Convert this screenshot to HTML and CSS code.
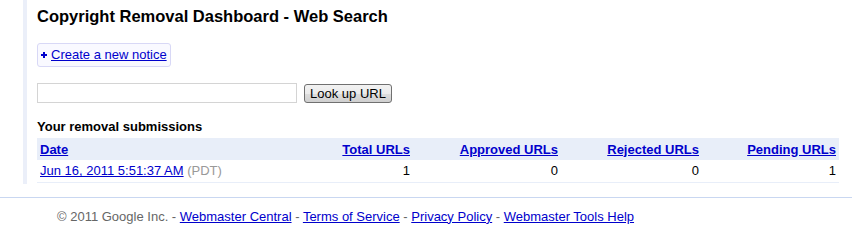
FILE: index.html
```html
<!DOCTYPE html>
<html lang="en">
<head>
  <meta charset="UTF-8" />
  <title>Copyright Removal Dashboard - Web Search</title>
  <link rel="stylesheet" href="styles.css">
</head>
<body>
  <div class="main">
    <h1>Copyright Removal Dashboard - Web Search</h1>

    <div class="notice">
      <svg class="plus" width="6" height="6" viewBox="0 0 6 6">
        <rect x="0" y="2" width="6" height="2" fill="#0000cc" />
        <rect x="2" y="0" width="2" height="6" fill="#0000cc" />
      </svg>
      <a href="#">Create a new notice</a>
    </div>

    <form class="lookup">
      <input type="text" class="url-box" />
      <button type="button" class="btn">Look up URL</button>
    </form>

    <h2>Your removal submissions</h2>
    <table class="submissions">
      <thead>
        <tr>
          <th class="col-date"><a href="#">Date</a></th>
          <th class="num col-total"><a href="#">Total URLs</a></th>
          <th class="num col-approved"><a href="#">Approved URLs</a></th>
          <th class="num col-rejected"><a href="#">Rejected URLs</a></th>
          <th class="num col-pending"><a href="#">Pending URLs</a></th>
        </tr>
      </thead>
      <tbody>
        <tr>
          <td><a href="#">Jun 16, 2011 5:51:37 AM</a> <span class="tz">(PDT)</span></td>
          <td class="num">1</td>
          <td class="num">0</td>
          <td class="num">0</td>
          <td class="num">1</td>
        </tr>
      </tbody>
    </table>
  </div>

  <!-- Footer -->
  <div class="footer">
    &copy; 2011 Google Inc. -
    <a href="#">Webmaster Central</a> -
    <a href="#">Terms of Service</a> -
    <a href="#">Privacy Policy</a> -
    <a href="#">Webmaster Tools Help</a>
  </div>
</body>
</html>
```

FILE: styles.css
```css
* {
  box-sizing: border-box;
}

body {
  margin: 0;
  background: #fff;
  font-family: "Liberation Sans", Arial, sans-serif;
  font-size: 13px;
  color: #000;
}

a {
  color: #0000cc;
}

/* left column with the blue rule */
.main {
  margin-left: 23px;
  width: 816px;
  border-left: 4px solid #ebeff9;
  padding: 7px 0 1px 10px;
}

h1 {
  margin: 0;
  font-size: 16.5px;
  line-height: 18px;
  font-weight: bold;
}

.notice {
  display: inline-flex;
  align-items: center;
  gap: 4px;
  margin-top: 18px;
  height: 24px;
  padding: 0 3px 0 3px;
  border: 1px solid #d8d8f6;
  border-radius: 3px;
  background: #f9f9ff;
  line-height: 16px;
}

.plus {
  display: block;
}

.lookup {
  display: flex;
  align-items: flex-start;
  gap: 7px;
  margin: 16px 0 0 0;
}

.url-box {
  width: 260px;
  height: 20px;
  margin: 0;
  border: 1px solid #d4d4d4;
  padding: 1px 3px;
  font-family: inherit;
  font-size: 13px;
}

.btn {
  margin-top: 1px;
  width: 88px;
  height: 19px;
  padding: 0;
  border: 1px solid #707070;
  border-radius: 3px;
  background: linear-gradient(#f2f2f2, #ebebeb 50%, #dddddd 51%, #cfcfcf);
  font-family: inherit;
  font-size: 13px;
  color: #000;
}

h2 {
  margin: 16px 0 4px 0;
  font-size: 13px;
  line-height: 15px;
  font-weight: bold;
}

.submissions {
  width: 100%;
  border-collapse: collapse;
  table-layout: fixed;
}

.submissions th,
.submissions td {
  height: 22px;
  padding: 0 3px;
  text-align: left;
  white-space: nowrap;
}

.submissions th {
  background: #e8eef9;
  font-weight: bold;
}

.submissions td {
  border-bottom: 1px solid #e8eef9;
}

.submissions .num {
  text-align: right;
}

.col-total { width: 148px; }
.col-approved { width: 148px; }
.col-rejected { width: 141px; }
.col-pending { width: 137px; }

.tz {
  color: #999;
}

.footer {
  margin: 13px 7px 0 0;
  border-top: 1px solid #c9d7f1;
  padding: 11px 0 0 57px;
  color: #666;
  line-height: 15px;
}
```
